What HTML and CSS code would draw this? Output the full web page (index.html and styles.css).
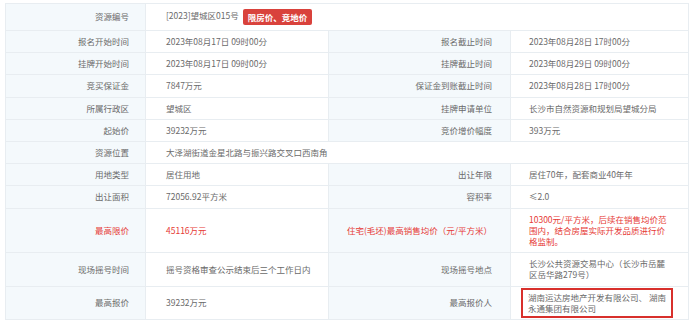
FILE: index.html
```html
<!DOCTYPE html>
<html lang="zh-CN">
<head>
<meta charset="utf-8">
<title>资源详情</title>
<link rel="stylesheet" href="styles.css">
</head>
<body>
<div class="page">
  <table class="info">
    <colgroup>
      <col class="c1"><col class="c2"><col class="c3"><col class="c4">
    </colgroup>
    <tbody>
      <tr>
        <th class="l1">资源编号</th>
        <td class="v1" colspan="3">[2023]望城区015号<span class="badge">限房价、竞地价</span></td>
      </tr>
      <tr>
        <th class="l1">报名开始时间</th>
        <td class="v1">2023年08月17日 09时00分</td>
        <th class="l2">报名截止时间</th>
        <td class="v2">2023年08月28日 17时00分</td>
      </tr>
      <tr>
        <th class="l1">挂牌开始时间</th>
        <td class="v1">2023年08月17日 09时00分</td>
        <th class="l2">挂牌截止时间</th>
        <td class="v2">2023年08月29日 09时00分</td>
      </tr>
      <tr>
        <th class="l1">竞买保证金</th>
        <td class="v1">7847万元</td>
        <th class="l2">保证金到账截止时间</th>
        <td class="v2">2023年08月28日 17时00分</td>
      </tr>
      <tr>
        <th class="l1">所属行政区</th>
        <td class="v1">望城区</td>
        <th class="l2">挂牌申请单位</th>
        <td class="v2">长沙市自然资源和规划局望城分局</td>
      </tr>
      <tr>
        <th class="l1">起始价</th>
        <td class="v1">39232万元</td>
        <th class="l2">竞价增价幅度</th>
        <td class="v2">393万元</td>
      </tr>
      <tr>
        <th class="l1">资源位置</th>
        <td class="v1" colspan="3">大泽湖街道金星北路与振兴路交叉口西南角</td>
      </tr>
      <tr>
        <th class="l1">用地类型</th>
        <td class="v1">居住用地</td>
        <th class="l2">出让年限</th>
        <td class="v2">居住70年，配套商业40年年</td>
      </tr>
      <tr>
        <th class="l1">出让面积</th>
        <td class="v1">72056.92平方米</td>
        <th class="l2">容积率</th>
        <td class="v2">≤2.0</td>
      </tr>
      <tr>
        <th class="l1 red">最高限价</th>
        <td class="v1 red">45116万元</td>
        <th class="l2 red">住宅(毛坯)最高销售均价（元/平方米）</th>
        <td class="v2 red">10300元/平方米，后续在销售均价范围内，结合房屋实际开发品质进行价格监制。</td>
      </tr>
      <tr>
        <th class="l1">现场摇号时间</th>
        <td class="v1">摇号资格审查公示结束后三个工作日内</td>
        <th class="l2">现场摇号地点</th>
        <td class="v2">长沙公共资源交易中心（长沙市岳麓区岳华路279号）</td>
      </tr>
      <tr>
        <th class="l1">最高报价</th>
        <td class="v1">39232万元</td>
        <th class="l2">最高报价人</th>
        <td class="v2"><div class="mark">湖南运达房地产开发有限公司、 湖南永通集团有限公司</div></td>
      </tr>
    </tbody>
  </table>
</div>
</body>
</html>
```

FILE: styles.css
```css
html, body {
  margin: 0;
  padding: 0;
  background: #ffffff;
}

.page {
  padding: 3px 5px 0 5px;
  font-family: "Noto Sans CJK SC", "Noto Sans", sans-serif;
  font-size: 8.5px;
  color: #6a6a6a;
}

.info {
  border-collapse: collapse;
  table-layout: fixed;
  width: 683px;
  border: 1px solid #e4e9ee;
}

.c1 { width: 140px; }
.c2 { width: 183px; }
.c3 { width: 182px; }
.c4 { width: 178px; }

.info th,
.info td {
  border: 1px solid #e8edf1;
  padding: 5px 0;
  line-height: 11.2px;
  vertical-align: middle;
  font-weight: normal;
}

.info th {
  background: #f4f9fc;
  text-align: right;
}

.info td {
  background: #ffffff;
  text-align: left;
}

.l1 { padding-right: 16px !important; }
.v1 { padding-left: 20px !important; padding-right: 10px !important; }
.l2 { padding-right: 18px !important; padding-left: 4px !important; }
.v2 { padding-left: 18px !important; padding-right: 18px !important; }

.red { color: #e63a36; }

.badge {
  display: inline-block;
  margin-left: 4px;
  padding: 2px 5px;
  line-height: 12px;
  background: #d9423c;
  color: #ffffff;
  font-weight: bold;
  border-radius: 2px;
  vertical-align: middle;
}

.mark {
  border: 2px solid #d8302c;
  margin: -4px -3px -4px -8px;
  padding: 2px 5px;
}
```
